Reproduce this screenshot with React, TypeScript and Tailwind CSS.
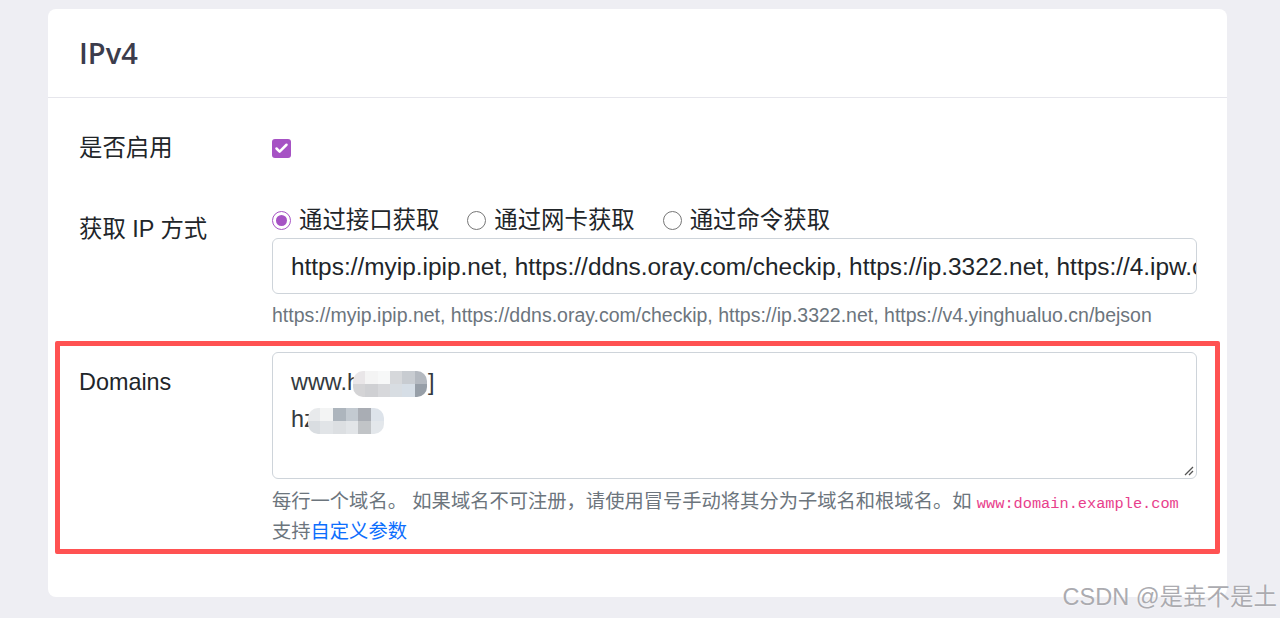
import { Check } from "lucide-react";

const sans = "font-['Liberation_Sans','Noto_Sans_CJK_SC',sans-serif]";

function Radio({ label, checked }: { label: string; checked?: boolean }) {
  return (
    <label className="flex items-center gap-[8px]">
      {checked ? (
        <span className="w-[19px] h-[19px] rounded-full border-[1.5px] border-[#a652c4] flex items-center justify-center">
          <span className="w-[11px] h-[11px] rounded-full bg-[#a652c4]" />
        </span>
      ) : (
        <span className="w-[19px] h-[19px] rounded-full border-[1.5px] border-[#767676] bg-white" />
      )}
      <span>{label}</span>
    </label>
  );
}

// pixelated mosaic standing in for a blurred-out domain
function Mosaic({ cells, w }: { cells: string[]; w: number }) {
  return (
    <span
      className="inline-grid grid-rows-2 grid-flow-col rounded-[10px] overflow-hidden blur-[0.6px] align-middle"
      style={{ width: w, height: 26 }}
    >
      {cells.map((c, i) => (
        <span key={i} style={{ background: c }} />
      ))}
    </span>
  );
}

export default function App() {
  return (
    <div className={`relative min-h-[618px] bg-[#eeeef3] pl-[48px] pr-[53px] pt-[9px] ${sans}`}>
      <div className="bg-white rounded-[8px] pb-[43px]">
        <div className="h-[89px] border-b border-[#e6e6ec] flex items-center px-[31px]">
          <h2 className="text-[29px] font-semibold text-[#3c3c4c] font-['Open_Sans','Noto_Sans',sans-serif]">IPv4</h2>
        </div>

        {/* 是否启用 */}
        <div className="grid grid-cols-[193px_minmax(0,1fr)] pl-[31px] pr-[30px] pt-[33px] text-[23.4px] leading-[35px] text-[#212529]">
          <div>是否启用</div>
          <div className="flex items-center">
            <span className="w-[19px] h-[19px] rounded-[3px] bg-[#a652c4] flex items-center justify-center">
              <Check className="w-[15px] h-[15px] text-white" strokeWidth={4} />
            </span>
          </div>
        </div>

        {/* 获取 IP 方式 */}
        <div className="grid grid-cols-[193px_minmax(0,1fr)] pl-[31px] pr-[30px] pt-[37px] text-[23.4px] leading-[35px] text-[#212529]">
          <div className="pt-[9px]">获取 IP 方式</div>
          <div className="min-w-0">
            <div className="flex items-center gap-[28px]">
              <Radio label="通过接口获取" checked />
              <Radio label="通过网卡获取" />
              <Radio label="通过命令获取" />
            </div>
            <div className="h-[56px] border border-[#ced4da] rounded-[6px] pl-[18px] pr-[6px] flex items-center overflow-hidden whitespace-nowrap text-[24.4px] text-[#212529]">
              https://myip.ipip.net, https://ddns.oray.com/checkip, https://ip.3322.net, https://4.ipw.cn
            </div>
            <div className="mt-[8px] text-[19.5px] leading-[27px] text-[#6c757d] whitespace-nowrap">
              https://myip.ipip.net, https://ddns.oray.com/checkip, https://ip.3322.net, https://v4.yinghualuo.cn/bejson
            </div>
          </div>
        </div>

        {/* Domains (highlighted) */}
        <div className="mx-[7px] mt-[12px] border-[5px] border-[#ff5252] rounded-[2px] pl-[19px] pr-[18px] pt-[6px] pb-[4px]">
          <div className="grid grid-cols-[193px_minmax(0,1fr)] text-[23.4px] leading-[35px] text-[#212529]">
            <div className="pt-[13px]">Domains</div>
            <div className="min-w-0">
              <div className="relative h-[127px] border border-[#ced4da] rounded-[6px] pl-[18px] pt-[11px] leading-[37px] text-[#343a40]">
                <div className="flex items-center">
                  <span>www.h</span>
                  <span className="-ml-[7px]">
                    <Mosaic
                      w={74}
                      cells={["#e9e6e8", "#d4d4d6", "#f4f4f4", "#cfd0d3", "#f7f8f8", "#d7d8db", "#d6d8db", "#d8dde2", "#c8ccd1", "#d6dee6", "#b4b9c0", "#979fa8"]}
                    />
                  </span>
                  <span className="ml-[1px]">]</span>
                </div>
                <div className="flex items-center">
                  <span>hz</span>
                  <span className="-ml-[8px]">
                    <Mosaic
                      w={76}
                      cells={["#e8eaec", "#d9dde1", "#f3f4f4", "#e1e4e7", "#adb5bd", "#dcdfe2", "#c3cad1", "#e2e5e8", "#a9adb4", "#c1c4c7", "#dde3ea", "#e3e7eb"]}
                    />
                  </span>
                </div>
                <svg className="absolute right-[2px] bottom-[2px]" width="12" height="12" viewBox="0 0 12 12">
                  <path d="M11 3 L3 11 M11 7 L7 11" stroke="#555" strokeWidth="1.3" />
                </svg>
              </div>
              <div className="mt-[9px] text-[19.3px] leading-[27px] text-[#6c757d]">
                <div className="whitespace-nowrap">
                  每行一个域名。 如果域名不可注册，请使用冒号手动将其分为子域名和根域名。如{" "}
                  <code className="font-['Liberation_Mono',monospace] text-[15.3px] text-[#e83e8c]">www:domain.example.com</code>
                </div>
                <div>
                  支持<a className="text-[#0d6efd]">自定义参数</a>
                </div>
              </div>
            </div>
          </div>
        </div>
      </div>

      <div className="absolute right-[3px] top-[582px] text-[23.5px] leading-[30px] text-[#ababb0] font-['Liberation_Sans','Noto_Sans_CJK_SC',sans-serif] [text-shadow:0_0_2px_#ffffff]">
        CSDN @是垚不是土
      </div>
    </div>
  );
}
